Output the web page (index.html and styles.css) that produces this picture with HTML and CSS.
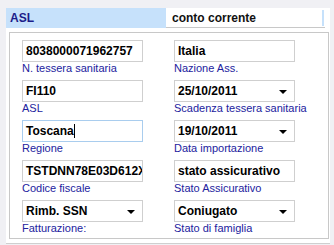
FILE: index.html
```html
<!DOCTYPE html>
<html lang="it">
<head>
  <meta charset="UTF-8">
  <title>ASL</title>
  <link rel="stylesheet" href="styles.css">
</head>
<body>
  <div class="box">
    <div class="tabs">
      <div class="tab tab-on">ASL</div>
      <div class="tab tab-off">conto corrente</div>
    </div>
    <div class="panel">
      <div class="field">
        <div class="inp">8038000071962757</div>
        <div class="lbl">N. tessera sanitaria</div>
      </div>
      <div class="field">
        <div class="inp">Italia</div>
        <div class="lbl">Nazione Ass.</div>
      </div>
      <div class="field">
        <div class="inp">FI110</div>
        <div class="lbl">ASL</div>
      </div>
      <div class="field">
        <div class="inp sel">25/10/2011<span class="arrow"></span></div>
        <div class="lbl">Scadenza tessera sanitaria</div>
      </div>
      <div class="field">
        <div class="inp focus">Toscana<span class="caret"></span></div>
        <div class="lbl">Regione</div>
      </div>
      <div class="field">
        <div class="inp sel">19/10/2011<span class="arrow"></span></div>
        <div class="lbl">Data importazione</div>
      </div>
      <div class="field">
        <div class="inp">TSTDNN78E03D612X</div>
        <div class="lbl">Codice fiscale</div>
      </div>
      <div class="field">
        <div class="inp">stato assicurativo</div>
        <div class="lbl">Stato Assicurativo</div>
      </div>
      <div class="field">
        <div class="inp sel">Rimb. SSN<span class="arrow"></span></div>
        <div class="lbl">Fatturazione:</div>
      </div>
      <div class="field">
        <div class="inp sel">Coniugato<span class="arrow"></span></div>
        <div class="lbl">Stato di famiglia</div>
      </div>
    </div>
  </div>
</body>
</html>
```

FILE: styles.css
```css
body {
  margin: 0;
  background: #f0f0f4;
  font-family: "Liberation Sans", Arial, sans-serif;
}

.box {
  margin: 8px 0 0 6px;
  width: 324px;
  height: 235px;
  background: #fff;
  border-bottom: 1px solid #cfcfcf;
}

.tabs {
  display: flex;
  height: 20px;
}

.tab {
  font-size: 12px;
  font-weight: bold;
  line-height: 20px;
  padding-left: 4px;
  box-sizing: border-box;
}

.tab-on {
  width: 160px;
  background: #c6e1fb;
  color: #1c1c8a;
}

.tab-off {
  width: 159px;
  color: #111;
  padding-left: 6px;
  border-bottom: 1px solid #c8c8c8;
  position: relative;
}

.tab-off::after {
  content: "";
  position: absolute;
  right: 1px;
  top: 2px;
  width: 2px;
  height: 16px;
  background: #c6e1fb;
}

.panel {
  margin: 4px 0 0 3px;
  width: 320px;
  height: 207px;
  box-sizing: border-box;
  border: 1px solid #c8c8c8;
  padding: 7px 0 0 12px;
  display: grid;
  grid-template-columns: 121px 121px;
  column-gap: 31px;
  grid-auto-rows: 40px;
}

.inp {
  height: 22px;
  box-sizing: border-box;
  border: 1px solid #cfcfcf;
  font-size: 12px;
  font-weight: bold;
  line-height: 20px;
  padding-left: 3px;
  color: #000;
  overflow: hidden;
  white-space: nowrap;
  position: relative;
}

.focus {
  border-color: #a9cdee;
}

.caret {
  display: inline-block;
  width: 1px;
  height: 14px;
  background: #000;
  vertical-align: -3px;
}

.arrow {
  position: absolute;
  right: 7px;
  top: 9px;
  border-left: 4px solid transparent;
  border-right: 4px solid transparent;
  border-top: 4px solid #000;
}

.lbl {
  font-size: 11px;
  color: #22229e;
  line-height: 14px;
  margin-top: -1px;
  white-space: nowrap;
}
```
